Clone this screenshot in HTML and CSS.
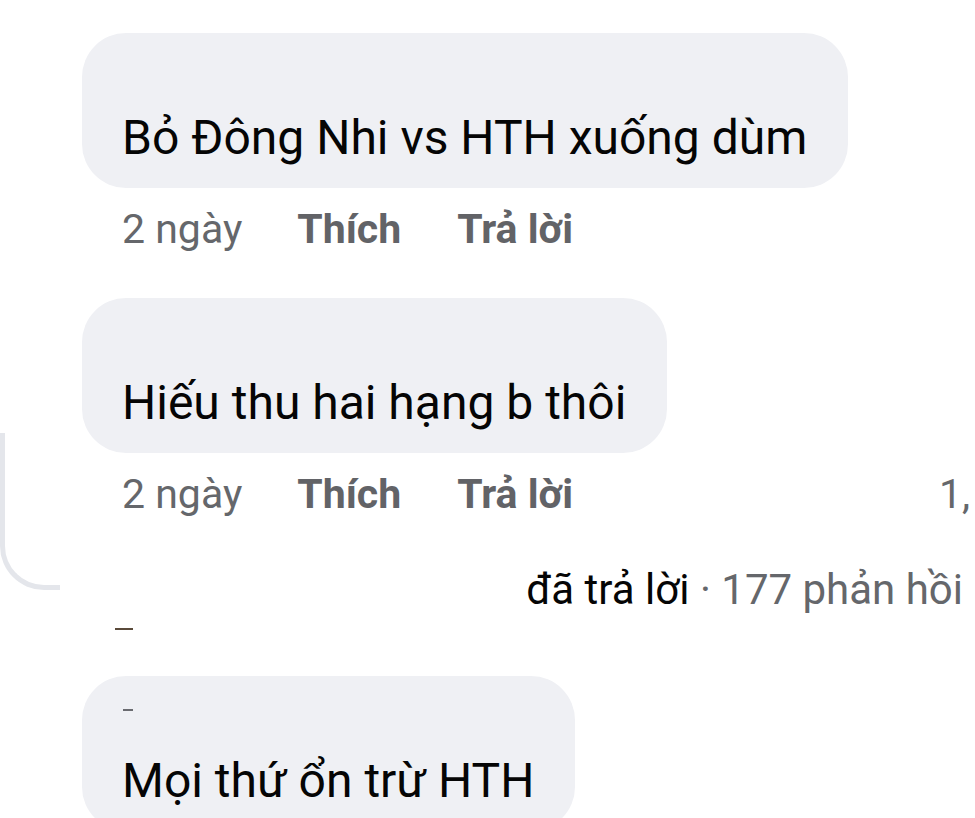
FILE: index.html
```html
<!DOCTYPE html>
<html lang="vi">
    <head>
        <meta charset="UTF-8">
        <meta name="viewport" content="width=device-width, initial-scale=1.0">
        <title>Bình luận</title>
        <link rel="stylesheet" href="styles.css">
    </head>
    <body>
        <div class="thread">
            <div class="comment">
                <div class="bubble">Bỏ Đông Nhi vs HTH xuống dùm</div>
                <div class="meta">
                    <span class="time">2 ngày</span>
                    <span class="act">Thích</span>
                    <span class="act">Trả lời</span>
                </div>
            </div>
            <div class="comment second">
                <div class="bubble">Hiếu thu hai hạng b thôi</div>
                <div class="meta">
                    <span class="time">2 ngày</span>
                    <span class="act">Thích</span>
                    <span class="act">Trả lời</span>
                    <span class="count">1,</span>
                </div>
                <div class="connector"></div>
                <div class="replies"><span class="who">đã trả lời</span> · 177 phản hồi</div>
                <span class="dash"></span>
            </div>
            <div class="comment">
                <div class="bubble"><span class="mark"></span>Mọi thứ ổn trừ HTH</div>
            </div>
        </div>
    </body>
</html>
```

FILE: styles.css
```css
body {
    margin: 0;
    background-color: #fff;
    font-family: "Roboto", "Noto Sans", sans-serif;
    color: #050505;
    overflow: hidden;
}
.thread {
    padding: 33px 0 0 82px;
}
.comment {
    position: relative;
    margin-bottom: 46px;
}
.bubble {
    position: relative;
    display: inline-block;
    background-color: #eff0f4;
    border-radius: 44px;
    padding: 77px 41px 22px 40px;
    font-size: 48px;
    line-height: 56px;
}
.mark {
    position: absolute;
    left: 41px;
    top: 33px;
    width: 10px;
    height: 2px;
    background-color: #6a6b70;
}
.meta {
    display: flex;
    align-items: center;
    height: 46px;
    margin-top: 18px;
    padding-left: 40px;
    font-size: 41px;
    color: #65676b;
}
.time {
    margin-right: 55px;
}
.act {
    font-weight: 700;
    margin-right: 56px;
    color: #626367;
}
.second .meta {
    width: 848px;
}
.second .meta .act + .act {
    margin-right: 0;
}
.count {
    margin-left: auto;
    color: #65676b;
}
.replies {
    text-align: right;
    width: 881px;
    margin-top: 49px;
    font-size: 42px;
    line-height: 48px;
    color: #65676b;
}
.who {
    color: #050505;
}
.connector {
    position: absolute;
    left: -82px;
    top: 135px;
    width: 55px;
    height: 152px;
    border-left: 5px solid #e4e6eb;
    border-bottom: 5px solid #e4e6eb;
    border-bottom-left-radius: 44px;
}
.dash {
    display: block;
    width: 18px;
    height: 2px;
    margin: 14px 0 3px 33px;
    background-color: #5a4a3a;
}
```
